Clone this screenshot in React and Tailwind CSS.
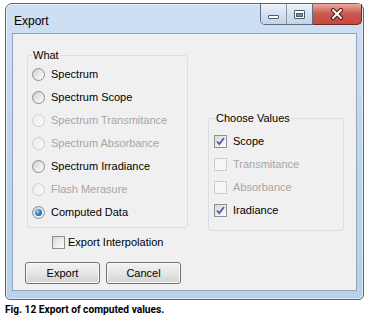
import React from "react";

function Radio({ label, disabled, checked }) {
  return (
    <div className="h-[23px] flex items-center">
      <div
        className={
          "w-[13px] h-[13px] rounded-full border flex items-center justify-center " +
          (disabled
            ? "border-[#cfcfcf] bg-gradient-to-br from-[#ececec] to-[#fafafa]"
            : "border-[#8c8c8c] bg-gradient-to-br from-[#cfcfcf] via-[#e9e9e9] to-[#fbfbfb]")
        }
      >
        {checked && (
          <div className="w-[7px] h-[7px] rounded-full bg-radial-[at_35%_35%] from-[#9fd3fb] via-[#2f7fcf] to-[#1b4f88]" />
        )}
      </div>
      <span
        className={
          "ml-[6px] text-[11px] leading-[13px] " +
          (disabled ? "text-[#a6a6a6]" : "text-black")
        }
      >
        {label}
      </span>
    </div>
  );
}

function Check({ label, disabled, checked }) {
  return (
    <div className="h-[23px] flex items-center">
      <Box disabled={disabled} checked={checked} />
      <span
        className={
          "ml-[6px] text-[11px] leading-[13px] " +
          (disabled ? "text-[#a6a6a6]" : "text-black")
        }
      >
        {label}
      </span>
    </div>
  );
}

function Box({ disabled, checked }) {
  return (
    <div
      className={
        "w-[13px] h-[13px] border flex items-center justify-center " +
        (disabled
          ? "border-[#cdcdcd] bg-[#f6f6f6]"
          : "border-[#8e8f8f] bg-gradient-to-br from-[#d6d6d6] via-[#ececec] to-[#fdfdfd]")
      }
    >
      {checked && (
        <svg width="11" height="11" viewBox="0 0 11 11">
          <path
            d="M2 5.5 L4.3 8 L9 2"
            fill="none"
            stroke="#4a5aa8"
            strokeWidth="1.8"
          />
        </svg>
      )}
    </div>
  );
}

function WinButton({ children }) {
  return (
    <div className="w-[75px] h-[22px] rounded-[3px] border border-[#707070] bg-gradient-to-b from-[#f3f3f3] via-[#e6e6e6] to-[#d2d2d2] shadow-[inset_0_0_0_1px_#fcfcfc] flex items-center justify-center text-[11px] text-black">
      {children}
    </div>
  );
}

export default function App() {
  return (
    <div className="w-[370px] h-[322px] bg-white overflow-hidden font-['Liberation_Sans',Arial,sans-serif]">
      <div className="pl-[5px] pt-[3px]">
        <div className="w-[359px] h-[297px] rounded-t-[7px] rounded-b-[5px] border border-[#56677a] bg-gradient-to-b from-[#cfe0f3] via-[#bfd5ee] to-[#b9d0ea] shadow-[inset_0_0_0_1px_rgba(255,255,255,0.55)] flex flex-col">
          {/* title bar */}
          <div className="h-[29px] flex items-start justify-between">
            <div className="pl-[8px] pt-[10px] text-[12px] leading-[14px] text-black">
              Export
            </div>
            <div className="flex mr-[1px]">
              <div className="flex h-[21px] border border-t-0 border-[#5d6e82] rounded-bl-[5px] overflow-hidden">
                <div className="w-[26px] h-full bg-gradient-to-b from-[#eef3f9] via-[#d3e0ef] to-[#c3d4e9] flex items-end justify-center pb-[5px] border-r border-[#8497ad]">
                  <div className="w-[11px] h-[4px] bg-white border border-[#4d5a6a] rounded-[1px]" />
                </div>
                <div className="w-[25px] h-full bg-gradient-to-b from-[#eef3f9] via-[#d3e0ef] to-[#c3d4e9] flex items-center justify-center">
                  <div className="w-[11px] h-[9px] border border-[#4d5a6a] bg-white rounded-[1px] flex items-center justify-center">
                    <div className="w-[7px] h-[4px] mt-[1px] bg-[#7d8da0] border border-[#4d5a6a]" />
                  </div>
                </div>
              </div>
              <div className="w-[49px] h-[21px] border border-t-0 border-l-0 border-[#6a2a25] rounded-br-[5px] bg-gradient-to-b from-[#e9a99c] via-[#c9574d] to-[#c7473d] flex items-center justify-center">
                <svg width="14" height="12" viewBox="0 0 14 12">
                  <path d="M3 2 L11 10 M11 2 L3 10" stroke="#4a1a16" strokeWidth="4" strokeLinecap="round" />
                  <path d="M3 2 L11 10 M11 2 L3 10" stroke="#ffffff" strokeWidth="2" strokeLinecap="round" />
                </svg>
              </div>
            </div>
          </div>

          {/* client */}
          <div className="mx-[6px] h-[258px] border border-[#8fa4bd] bg-[#f0f0f0] flex pl-[12px]">
            <div className="flex flex-col pt-[14.5px]">
              <fieldset className="ml-[2px] w-[161px] h-[179px] border border-[#d5dfe5] rounded-[3px] pl-[4px] pt-[1.5px]">
                <legend className="px-[1px] text-[11px] leading-[13px] text-black">What</legend>
                <Radio label="Spectrum" />
                <Radio label="Spectrum Scope" />
                <Radio label="Spectrum Transmitance" disabled />
                <Radio label="Spectrum Absorbance" disabled />
                <Radio label="Spectrum Irradiance" />
                <Radio label="Flash Merasure" disabled />
                <Radio label="Computed Data" checked />
              </fieldset>
              <div className="ml-[27px] mt-[7.5px] h-[14px] flex items-center">
                <Box />
                <span className="ml-[3px] text-[11px] leading-[13px] text-black">
                  Export Interpolation
                </span>
              </div>
              <div className="mt-[13px] flex gap-[6px]">
                <WinButton>Export</WinButton>
                <WinButton>Cancel</WinButton>
              </div>
            </div>
            <div className="ml-[20px] pt-[77.5px]">
              <fieldset className="w-[136px] h-[119px] border border-[#d5dfe5] rounded-[3px] pl-[5px] pt-[5px]">
                <legend className="ml-[1px] px-[1px] text-[11px] leading-[13px] text-black">
                  Choose Values
                </legend>
                <Check label="Scope" checked />
                <Check label="Transmitance" disabled />
                <Check label="Absorbance" disabled />
                <Check label="Iradiance" checked />
              </fieldset>
            </div>
          </div>
        </div>
      </div>
      <div className="pl-[5px] pt-[3px] font-['Roboto',sans-serif] text-[10.2px] leading-[13px] font-bold text-black">
        Fig. 12 Export of computed values.
      </div>
    </div>
  );
}
